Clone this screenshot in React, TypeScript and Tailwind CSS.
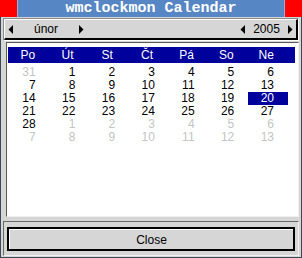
import React from 'react'

const days = ['Po', 'Út', 'St', 'Čt', 'Pá', 'So', 'Ne']

type Cell = { n: number; other?: boolean }

const weeks: Cell[][] = [
  [{ n: 31, other: true }, { n: 1 }, { n: 2 }, { n: 3 }, { n: 4 }, { n: 5 }, { n: 6 }],
  [7, 8, 9, 10, 11, 12, 13].map((n) => ({ n })),
  [14, 15, 16, 17, 18, 19, 20].map((n) => ({ n })),
  [21, 22, 23, 24, 25, 26, 27].map((n) => ({ n })),
  [{ n: 28 }, ...[1, 2, 3, 4, 5, 6].map((n) => ({ n, other: true }))],
  [7, 8, 9, 10, 11, 12, 13].map((n) => ({ n, other: true })),
]

function Arrow({ dir }: { dir: 'left' | 'right' }) {
  return (
    <svg width="6" height="9" viewBox="0 0 6 9" className="shrink-0">
      {dir === 'left' ? <polygon points="5,0 5,9 0.5,4.5" fill="#000" /> : <polygon points="1,0 1,9 5.5,4.5" fill="#000" />}
    </svg>
  )
}

export default function App() {
  return (
    <div className="flex h-[258px] w-[302px] flex-col bg-[#d6d6d6] font-['Liberation_Sans',Arial,sans-serif] text-[12px] text-black">
      {/* Title bar */}
      <div className="flex h-[17px] shrink-0">
        <div className="w-[17px] bg-[#ff0000]" />
        <div className="flex flex-1 items-center justify-center border-x border-[#8fb0dc] bg-[#5686c4] font-['Liberation_Mono',monospace] text-[15px] font-bold leading-none text-white">
          wmclockmon Calendar
        </div>
        <div className="w-[17px] bg-[#ff0000]" />
      </div>

      {/* Window body */}
      <div className="flex flex-1 flex-col border-x border-b border-[#3a4858] px-[2px] pt-[1px]">
        {/* Navigation */}
        <div className="shrink-0 border border-b-white border-l-[#8a8a8a] border-r-white border-t-[#8a8a8a]">
          <div className="flex h-[21px] items-center border-b-2 border-l border-r-2 border-t border-b-black border-l-white border-r-black border-t-white pl-[3px] pr-[3px]">
            <Arrow dir="left" />
            <span className="w-[64px] text-center leading-none">únor</span>
            <Arrow dir="right" />
            <div className="flex-1" />
            <Arrow dir="left" />
            <span className="w-[41px] text-center leading-none">2005</span>
            <Arrow dir="right" />
          </div>
        </div>

        {/* Calendar */}
        <div className="ml-[3px] mt-[1px] flex h-[175px] shrink-0 flex-col border border-b-[#f0f0f0] border-l-[#5a5a5a] border-r-[#f0f0f0] border-t-[#5a5a5a] bg-white">
          <div className="ml-[1px] mr-[3px] mt-[4px] h-[16px] bg-[#00009c]">
            <div className="grid w-[278px] grid-cols-7 text-center leading-[16px] text-white">
              {days.map((d) => (
                <span key={d}>{d}</span>
              ))}
            </div>
          </div>
          <div className="ml-[1px] mt-[3px] w-[278px]">
            {weeks.map((week, i) => (
              <div key={i} className="grid grid-cols-7 leading-[13px]">
                {week.map((c, j) => {
                  const selected = !c.other && c.n === 20
                  return (
                    <span
                      key={j}
                      className={
                        selected
                          ? 'ml-[2px] -mr-[2px] h-[13px] bg-[#00009c] pr-[14px] text-right text-white'
                          : c.other
                            ? 'h-[13px] pr-[12px] text-right text-[#c4c4c4]'
                            : 'h-[13px] pr-[12px] text-right'
                      }
                    >
                      {c.n}
                    </span>
                  )
                })}
              </div>
            ))}
          </div>
        </div>

        {/* Button area */}
        <div className="mt-[4px] shrink-0 border border-b-[#f0f0f0] border-l-[#6a6a6a] border-r-[#f0f0f0] border-t-[#6a6a6a] px-[3px] pb-[4px] pt-[5px]">
          <button className="block h-[24px] w-full border-2 border-black p-0">
            <div className="flex h-full items-center justify-center border-l border-t border-white bg-[#d6d6d6] leading-none">
              Close
            </div>
          </button>
        </div>
      </div>
    </div>
  )
}
